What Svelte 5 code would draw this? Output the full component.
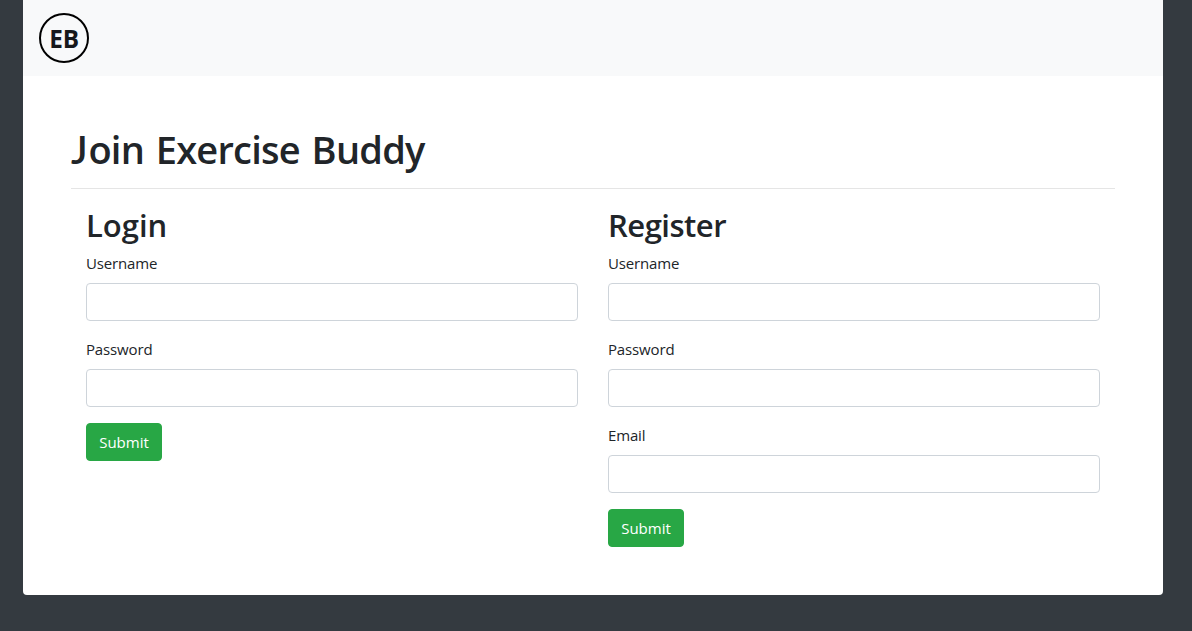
<script>
  const forms = [
    { id: 'login', title: 'Login', fields: ['Username', 'Password'] },
    { id: 'register', title: 'Register', fields: ['Username', 'Password', 'Email'] }
  ];
</script>

<div class="page">
  <div class="container">
    <nav>
      <svg width="50" height="50" viewBox="0 0 50 50">
        <circle cx="25" cy="25" r="24" fill="none" stroke="#000" stroke-width="2" />
        <text x="10.2" y="35" textLength="30" lengthAdjust="spacingAndGlyphs">EB</text>
      </svg>
    </nav>
    <main>
      <h1><span class="initial">J</span>oin Exercise Buddy</h1>
      <hr />
      <div class="row">
        {#each forms as form}
          <form class="col" onsubmit={(e) => e.preventDefault()}>
            <h2 class={form.id}>{form.title}</h2>
            {#each form.fields as field}
              <div class="group">
                <label class={field.toLowerCase()} for={form.id + field}>{field}</label>
                <input id={form.id + field} type={field === 'Password' ? 'password' : 'text'} />
              </div>
            {/each}
            <button type="submit">Submit</button>
          </form>
        {/each}
      </div>
    </main>
  </div>
</div>

<style>
  .page {
    box-sizing: border-box;
    min-height: 631px;
    background: #343a40;
    color: #212529;
    font-family: 'Open Sans', 'Noto Sans', sans-serif;
    font-size: 15px;
    line-height: 24px;
  }
  .page * { box-sizing: border-box; }
  .container {
    width: 1140px;
    height: 595px;
    margin-left: 23px;
    background: #fff;
    border-radius: 0 0 4px 4px;
  }
  nav {
    height: 76px;
    padding: 13px 16px;
    background: #f8f9fa;
  }
  nav svg { display: block; }
  nav text { font-size: 25px; font-weight: 700; fill: #16181b; }
  main { padding: 48px; }
  h1, h2 { margin: 0 0 8px; font-weight: 550; white-space: nowrap; }
  h1 { height: 48px; font-size: 38px; line-height: 51px; letter-spacing: -0.75px; word-spacing: 2.5px; }
  .initial { font-family: Lato, sans-serif; font-size: 39px; font-weight: 600; margin-right: 1.5px; line-height: 1; }
  h2 { height: 38px; font-size: 31px; line-height: 41px; }
  .login { letter-spacing: 0; }
  .register { letter-spacing: -0.5px; }
  hr { margin: 16px 0; border: 0; border-top: 1px solid rgba(0, 0, 0, 0.1); }
  .row { display: flex; }
  .col { flex: 1; padding: 0 15px; }
  .group { margin-bottom: 16px; }
  label { display: block; width: max-content; height: 24px; margin-bottom: 8px; letter-spacing: -0.15px; }
  input {
    display: block;
    width: 100%;
    height: 38px;
    padding: 6px 12px;
    border: 1px solid #ced4da;
    border-radius: 4px;
    background: #fff;
    font: inherit;
  }
  button {
    display: block;
    width: 76px;
    height: 38px;
    padding: 0;
    border: 1px solid #28a745;
    border-radius: 4px;
    background: #28a745;
    color: #fff;
    font: inherit;
  }
</style>
